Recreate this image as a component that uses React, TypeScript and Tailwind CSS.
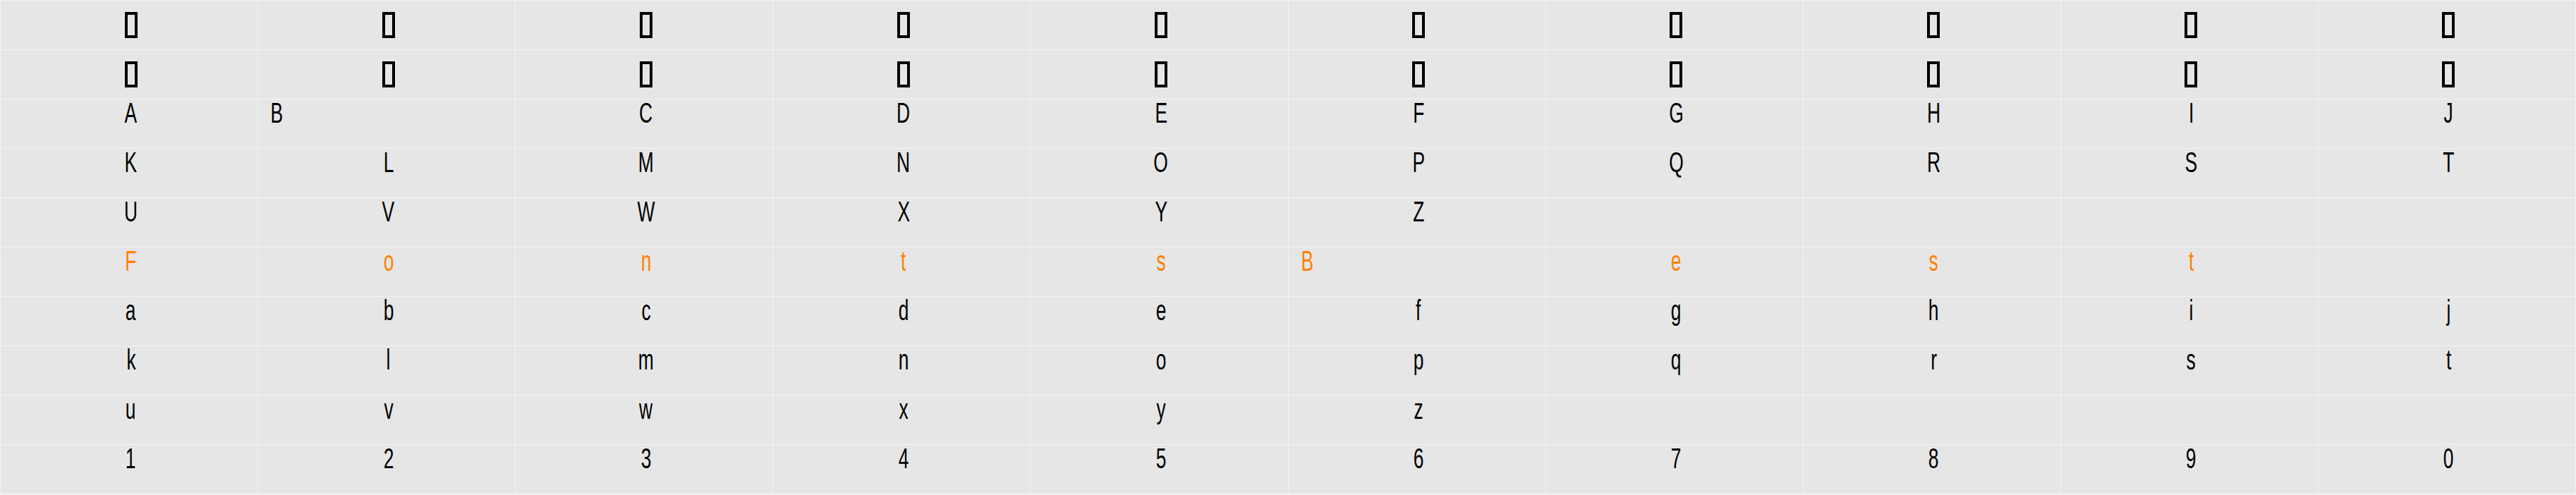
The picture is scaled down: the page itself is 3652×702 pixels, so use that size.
const TOFU = "\u0000";

type CellDef = { ch: string; left?: boolean };

const rows: { cells: CellDef[]; orange?: boolean }[] = [
  { cells: Array.from({ length: 10 }, () => ({ ch: TOFU })) },
  { cells: Array.from({ length: 10 }, () => ({ ch: TOFU })) },
  {
    cells: [
      { ch: "A" },
      { ch: "B", left: true },
      { ch: "C" },
      { ch: "D" },
      { ch: "E" },
      { ch: "F" },
      { ch: "G" },
      { ch: "H" },
      { ch: "I" },
      { ch: "J" },
    ],
  },
  { cells: "KLMNOPQRST".split("").map((ch) => ({ ch })) },
  { cells: "UVWXYZ    ".split("").map((ch) => ({ ch })) },
  {
    orange: true,
    cells: [
      { ch: "F" },
      { ch: "o" },
      { ch: "n" },
      { ch: "t" },
      { ch: "s" },
      { ch: "B", left: true },
      { ch: "e" },
      { ch: "s" },
      { ch: "t" },
      { ch: " " },
    ],
  },
  { cells: "abcdefghij".split("").map((ch) => ({ ch })) },
  { cells: "klmnopqrst".split("").map((ch) => ({ ch })) },
  { cells: "uvwxyz    ".split("").map((ch) => ({ ch })) },
  { cells: "1234567890".split("").map((ch) => ({ ch })) },
];

const Cell = ({ cell, orange }: { cell: CellDef; orange?: boolean }) => {
  if (cell.ch === TOFU) {
    return (
      <div className="h-[69px] bg-[#e6e6e6] flex justify-center pt-[16px] pl-[5px]">
        <span className="block w-[18px] h-[37px] border-[4px] border-black" />
      </div>
    );
  }

  return (
    <div
      className={`h-[69px] bg-[#e6e6e6] font-['Liberation_Sans',Arial,sans-serif] text-[40px] leading-[38px] ${
        cell.left ? "text-left pl-[13px]" : "text-center pl-[5px]"
      } ${orange ? "text-[#ff8000]" : "text-black"}`}
    >
      <span className="inline-block scale-x-[0.66] whitespace-pre">{cell.ch}</span>
    </div>
  );
};

export default function App() {
  return (
    <div className="w-[3652px] h-[702px] bg-[#f3f3f3] p-px flex flex-col gap-px">
      {rows.map((row, i) => (
        <div key={i} className="grid grid-cols-10 gap-px">
          {row.cells.map((cell, j) => (
            <Cell key={j} cell={cell} orange={row.orange} />
          ))}
        </div>
      ))}
    </div>
  );
}
